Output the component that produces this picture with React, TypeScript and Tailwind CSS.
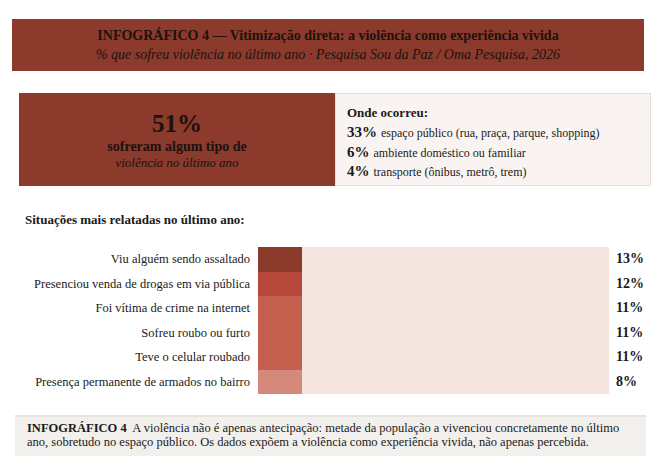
const situacoes = [
  { label: "Viu alguém sendo assaltado", value: 13, color: "bg-[#8b3a2b]" },
  { label: "Presenciou venda de drogas em via pública", value: 12, color: "bg-[#b5483a]" },
  { label: "Foi vítima de crime na internet", value: 11, color: "bg-[#c4604d]" },
  { label: "Sofreu roubo ou furto", value: 11, color: "bg-[#c4604d]" },
  { label: "Teve o celular roubado", value: 11, color: "bg-[#c4604d]" },
  { label: "Presença permanente de armados no bairro", value: 8, color: "bg-[#d4897a]" },
];

const locais = [
  { pct: "33%", text: "espaço público (rua, praça, parque, shopping)" },
  { pct: "6%", text: "ambiente doméstico ou familiar" },
  { pct: "4%", text: "transporte (ônibus, metrô, trem)" },
];

export default function App() {
  return (
    <div className="w-[668px] h-[474px] bg-white text-[#1a1a1a] font-[family-name:Liberation_Serif,serif] overflow-hidden pt-[19px]">
      {/* header band */}
      <div className="ml-[12px] w-[632px] h-[52px] bg-[#8b3a2b] flex flex-col items-center justify-center text-[#1c1210]">
        <div className="text-[14px] font-bold leading-[19px]">
          INFOGRÁFICO 4 — Vitimização direta: a violência como experiência vivida
        </div>
        <div className="text-[14px] italic leading-[19px]">
          % que sofreu violência no último ano · Pesquisa Sou da Paz / Oma Pesquisa, 2026
        </div>
      </div>

      {/* summary card */}
      <div className="mt-[22px] ml-[19px] w-[632px] h-[93px] flex">
        <div className="w-[316px] bg-[#8b3a2b] flex flex-col items-center justify-center text-[#1c1210] pt-[2px]">
          <div className="text-[25px] font-bold leading-[28px]">51%</div>
          <div className="text-[14px] font-bold leading-[17px]">sofreram algum tipo de</div>
          <div className="text-[13px] italic leading-[16px]">violência no último ano</div>
        </div>
        <div className="flex-1 bg-[#f9f4f1] border border-[#ecdcd6] pl-[11px] pt-[10px]">
          <div className="text-[13px] font-bold leading-[18px] mb-[1px]">Onde ocorreu:</div>
          {locais.map((l) => (
            <div key={l.pct} className="leading-[18.5px] whitespace-nowrap">
              <span className="text-[15px] font-bold">{l.pct}</span>{" "}
              <span className="text-[12px]">{l.text}</span>
            </div>
          ))}
        </div>
      </div>

      {/* bar chart */}
      <div className="mt-[25px] ml-[25px] text-[13px] font-bold leading-[18px]">
        Situações mais relatadas no último ano:
      </div>
      <div className="mt-[18px] flex flex-col">
        {situacoes.map((s) => (
          <div key={s.label} className="flex items-center h-[24.5px]">
            <div className="w-[250px] text-right text-[12.5px] leading-[16px] whitespace-nowrap">{s.label}</div>
            <div className="ml-[8px] w-[351px] h-full bg-[#f4e5e1] flex">
              <div className={`w-[44px] h-full ${s.color}`} />
            </div>
            <div className="ml-[7px] text-[14px] font-bold leading-[16px]">{s.value}%</div>
          </div>
        ))}
      </div>

      {/* note */}
      <div className="mt-[21px] ml-[15px] w-[631px] h-[41px] bg-[#f2f0ec] border-t-2 border-[#e7e4df] pl-[12px] pr-[8px] pt-[4px] text-[12.5px] leading-[14px]">
        <b>INFOGRÁFICO 4</b>
        {"\u00a0 "}A violência não é apenas antecipação: metade da população a vivenciou concretamente no último ano, sobretudo no espaço público. Os dados expõem a violência como experiência vivida, não apenas percebida.
      </div>
    </div>
  );
}
